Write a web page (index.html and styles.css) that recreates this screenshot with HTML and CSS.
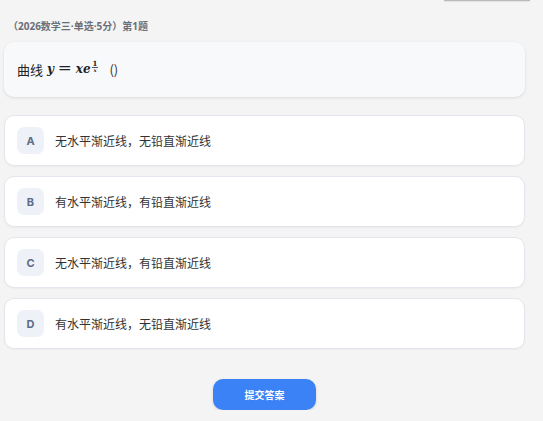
FILE: index.html
```html
<!DOCTYPE html>
<html lang="zh">
<head>
<meta charset="utf-8">
<link rel="stylesheet" href="styles.css">
</head>
<body>
<div class="page">
  <div class="topbar"><div class="topbar-edge"></div></div>
  <div class="meta">（2026数学三·单选·5分）第1题</div>
  <div class="question">
    <span class="q-text">曲线</span>
    <span class="math"><i>y</i><span class="eq">=</span><i>xe</i><span class="sup"><span class="num">1</span><span class="den"><i>x</i></span></span></span>
    <span class="paren">()</span>
  </div>
  <div class="options">
    <div class="option"><span class="badge">A</span><span class="opt-text">无水平渐近线，无铅直渐近线</span></div>
    <div class="option"><span class="badge">B</span><span class="opt-text">有水平渐近线，有铅直渐近线</span></div>
    <div class="option"><span class="badge">C</span><span class="opt-text">无水平渐近线，有铅直渐近线</span></div>
    <div class="option"><span class="badge">D</span><span class="opt-text">有水平渐近线，无铅直渐近线</span></div>
  </div>
  <div class="actions"><button class="submit">提交答案</button></div>
</div>
</body>
</html>
```

FILE: styles.css
```css
html, body {
  margin: 0;
  padding: 0;
  background: #f4f4f4;
}
body {
  font-family: "Noto Sans CJK SC", "Noto Sans", sans-serif;
  color: #333;
}
.page {
  width: 521px;
  margin-left: 4px;
}
.topbar {
  display: flex;
  justify-content: flex-end;
  height: 2px;
  margin-right: -5px;
}
.topbar-edge {
  width: 86px;
  height: 1px;
  background: #b9b9b9;
  box-shadow: 0 1px 1px rgba(0,0,0,0.08);
}
.meta {
  font-family: "Open Sans", "Noto Sans CJK SC", sans-serif;
  font-size: 10px;
  font-weight: 700;
  color: #6b6f78;
  line-height: 14px;
  margin: 17px 0 9px 4px;
}
.question {
  background: #f8f9fb;
  border-radius: 10px;
  box-shadow: 0 1px 3px rgba(0,0,0,0.10);
  height: 55px;
  display: flex;
  align-items: center;
  padding: 0 13px;
  box-sizing: border-box;
  font-size: 13px;
  color: #222;
}
.q-text {
  margin-right: 4px;
}
.math {
  font-family: "DejaVu Serif", "Liberation Serif", serif;
  font-weight: 700;
  font-size: 12px;
  display: inline-flex;
  align-items: baseline;
  color: #222;
}
.math .eq {
  font-style: normal;
  margin: 0 5px;
  font-weight: 400;
  font-size: 14px;
  display: inline-block;
  transform: scaleX(1.2);
}
.sup {
  display: inline-flex;
  flex-direction: column;
  align-items: center;
  font-size: 7px;
  line-height: 7px;
  margin-left: 1px;
  position: relative;
  top: -7px;
}
.sup .num {
  border-bottom: 1px solid #555;
  padding: 0 1px;
  font-weight: 700;
  font-style: normal;
}
.sup .den {
  font-size: 5px;
  line-height: 5px;
}
.paren {
  margin-left: 11px;
  font-size: 13px;
  color: #333;
}
.options {
  display: flex;
  flex-direction: column;
  gap: 10px;
  margin-top: 18px;
}
.option {
  background: #fff;
  border: 1px solid #e3e6ec;
  border-radius: 10px;
  box-shadow: 0 1px 2px rgba(0,0,0,0.04);
  display: flex;
  align-items: center;
  padding: 11px 12px;
  height: 51px;
  box-sizing: border-box;
}
.badge {
  width: 27px;
  height: 27px;
  border-radius: 7px;
  background: #eef2f8;
  color: #5d6b86;
  font-family: "Inter", "Noto Sans", sans-serif;
  font-weight: 700;
  font-size: 11px;
  display: flex;
  align-items: center;
  justify-content: center;
  flex: none;
}
.opt-text {
  margin-left: 11px;
  font-size: 12px;
  color: #333;
}
.actions {
  display: flex;
  justify-content: center;
  margin-top: 30px;
}
.submit {
  width: 103px;
  height: 31px;
  border: none;
  border-radius: 10px;
  background: #3b82f6;
  color: #fff;
  font-family: "Noto Sans CJK SC", sans-serif;
  font-weight: 700;
  font-size: 10px;
  box-shadow: 0 1px 3px rgba(0,0,0,0.15);
}
```
